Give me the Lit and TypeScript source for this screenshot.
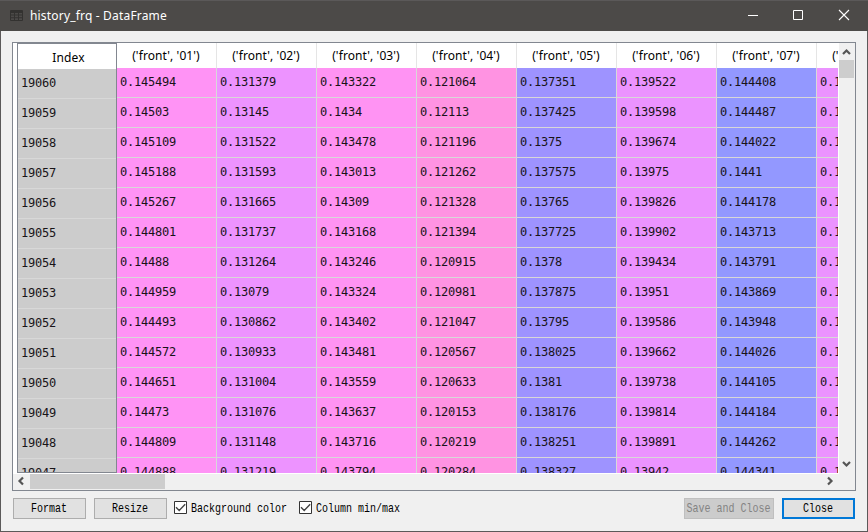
import { LitElement, html, css, svg } from "lit";
import { customElement } from "lit/decorators.js";
import { classMap } from "lit/directives/class-map.js";

const index = Array.from({ length: 14 }, (_, i) => String(19060 - i));

const columns = [
  { name: "('front', '01')", color: "#ff93f5", values: "0.145494 0.14503 0.145109 0.145188 0.145267 0.144801 0.14488 0.144959 0.144493 0.144572 0.144651 0.14473 0.144809 0.144888" },
  { name: "('front', '02')", color: "#ed93ff", values: "0.131379 0.13145 0.131522 0.131593 0.131665 0.131737 0.131264 0.13079 0.130862 0.130933 0.131004 0.131076 0.131148 0.131219" },
  { name: "('front', '03')", color: "#ff93f3", values: "0.143322 0.1434 0.143478 0.143013 0.14309 0.143168 0.143246 0.143324 0.143402 0.143481 0.143559 0.143637 0.143716 0.143794" },
  { name: "('front', '04')", color: "#ff93e2", values: "0.121064 0.12113 0.121196 0.121262 0.121328 0.121394 0.120915 0.120981 0.121047 0.120567 0.120633 0.120153 0.120219 0.120284" },
  { name: "('front', '05')", color: "#9e93ff", values: "0.137351 0.137425 0.1375 0.137575 0.13765 0.137725 0.1378 0.137875 0.13795 0.138025 0.1381 0.138176 0.138251 0.138327" },
  { name: "('front', '06')", color: "#eb93ff", values: "0.139522 0.139598 0.139674 0.13975 0.139826 0.139902 0.139434 0.13951 0.139586 0.139662 0.139738 0.139814 0.139891 0.13942" },
  { name: "('front', '07')", color: "#9398ff", values: "0.144408 0.144487 0.144022 0.1441 0.144178 0.143713 0.143791 0.143869 0.143948 0.144026 0.144105 0.144184 0.144262 0.144341" },
  { name: "('front', '08')", color: "#eb93ff", values: Array(14).fill("0.14").map((v, i) => v + (1020 + i * 7)).join(" ") },
];

const chevron = (d: string) => html`<svg class="chev" width="17" height="17" viewBox="0 0 17 17">
  ${svg`<path d=${d} fill="none" stroke="#555" stroke-width="2.2"></path>`}
</svg>`;

@customElement("title-bar")
export class TitleBar extends LitElement {
  static styles = css`
    :host { display: flex; height: 31px; flex: none; background: #4c4a48; color: #fff; align-items: center;
      box-sizing: border-box; border-top: 1px solid #5b5959; font: 12px "Noto Sans", sans-serif; }
    .icon { margin: 0 7px 2px 10px; }
    .title { flex: 1; white-space: pre; padding-bottom: 1px; letter-spacing: .18px; }
    .controls { display: flex; padding-right: 1px; }
    .ctl { width: 46px; height: 30px; display: block; }
  `;
  render() {
    return html`
      <svg class="icon" width="13" height="11" viewBox="0 0 13 11">
        <rect width="13" height="11" rx="1" fill="#333230"></rect>
        <path d="M1 3h3v1.5h-3zM5 3h3v1.5h-3zM9 3h3v1.5h-3zM1 5.6h3v1.6h-3zM5 5.6h3v1.6h-3zM9 5.6h3v1.6h-3zM1 8.3h3v1.6h-3zM5 8.3h3v1.6h-3zM9 8.3h3v1.6h-3z" fill="#4c4a48"></path>
      </svg>
      <span class="title">history_frq - DataFrame</span>
      <div class="controls">
        <svg class="ctl" viewBox="0 0 46 30"><path d="M19 14.5h10" stroke="#fff"></path></svg>
        <svg class="ctl" viewBox="0 0 46 30"><path d="M18.5 9.5h9v9h-9z" fill="none" stroke="#fff"></path></svg>
        <svg class="ctl" viewBox="0 0 46 30"><path d="M18 9l10 10M28 9l-10 10" stroke="#fff" stroke-width="1.1"></path></svg>
      </div>`;
  }
}

@customElement("data-grid")
export class DataGrid extends LitElement {
  static styles = css`
    :host { display: grid; box-sizing: border-box; width: 844px; height: 449px; border: 1px solid #828790;
      grid-template: 430px 17px / 826px 16px; background: #fff; }
    .view { display: flex; overflow: hidden; padding-left: 4px; border-right: 1px solid #fff; }
    .index { width: 100px; height: 430px; flex: none; box-sizing: border-box; overflow: hidden; background: #ccc;
      border: 1px solid #828790; }
    .head { background: #fff; height: 25px; display: flex; align-items: center; justify-content: center;
      font: 12px "Noto Sans", sans-serif; color: #000; white-space: pre; box-sizing: border-box; }
    .col .head { border-right: 1px solid #e5e5e5; padding-right: 1px; letter-spacing: .1px; }
    .index .head { padding: 1px 0 0 3px; letter-spacing: .2px; }
    .cell { height: 30px; line-height: 28px; box-sizing: border-box; padding-left: 3px;
      border-right: 1px solid #d8d8d8; border-bottom: 1px solid #d8d8d8;
      font-family: "DejaVu Sans Mono", monospace; font-size: 12px; letter-spacing: -.224px; color: #181418; }
    .index .cell { border-right: 0; line-height: 28px; }
    .col { width: 100px; flex: none; }
    .vbar, .hbar { background: #f0f0f0; display: flex; }
    .vbar { flex-direction: column; }
    .vthumb { width: 15px; height: 18px; background: #cdcdcd; }
    .hthumb { width: 135px; height: 15px; background: #cdcdcd; }
    .gap { flex: 1; }
    .hbar { border-top: 1px solid #fff; overflow: hidden; }
    .hbar .chev { margin-top: -1px; }
    .corner { background: #f0f0f0; }
    .chev { display: block; flex: none; }
  `;
  render() {
    return html`
      <div class="view">
        <div class="index">
          <div class="head">Index</div>
          ${index.map((v) => html`<div class="cell">${v}</div>`)}
        </div>
        ${columns.map((c) => html`<div class="col">
          <div class="head">${c.name}</div>
          ${c.values.split(" ").map((v) => html`<div class="cell" style="background:${c.color}">${v}</div>`)}
        </div>`)}
      </div>
      <div class="vbar">${chevron("M4 11l3.5-3.5l3.5 3.5")}<div class="vthumb"></div><div class="gap"></div>${chevron("M4 6l3.5 3.5l3.5-3.5")}</div>
      <div class="hbar">${chevron("M10 4.5l-3.5 3.5l3.5 3.5")}<div class="hthumb"></div><div class="gap"></div>${chevron("M6 4.5l3.5 3.5l-3.5 3.5")}</div>
      <div class="corner"></div>`;
  }
}

@customElement("app-root")
export class AppRoot extends LitElement {
  static styles = css`
    :host { display: flex; flex-direction: column; width: 868px; height: 532px; box-sizing: border-box;
      background: #f0f0f0; overflow: hidden; }
    .body { flex: 1; box-sizing: border-box; border: 1px solid #5b5959; border-top: 0; padding: 11px 0 0 11px; }
    .footer { display: flex; align-items: center; margin: 7px 12px 0 1px; height: 21px; }
    .btn { box-sizing: border-box; height: 21px; border: 1px solid #adadad; background: #e1e1e1; display: flex;
      align-items: center; justify-content: center; margin-right: 8px; width: 73px; flex: none; }
    .txt { font: 10px/12px "Liberation Mono", monospace; color: #000; white-space: pre; transform: scaleY(1.22);
      display: inline-block; padding-top: 1px; }
    .btn .txt { padding-right: 1px; }
    .disabled { width: 90px; background: #ccc; border-color: #bfbfbf; }
    .disabled .txt { color: #838383; }
    .primary { border: 2px solid #0078d7; margin-right: 0; }
    .check { display: flex; align-items: center; margin: 0 13px 0 -1px; }
    .box { margin-right: 4px; margin-bottom: 2px; }
    .gap { flex: 1; }
  `;
  private button(label: string, kind = "") {
    return html`<div class=${classMap({ btn: true, disabled: kind === "disabled", primary: kind === "primary" })}>
      <span class="txt">${label}</span></div>`;
  }
  private check(label: string) {
    return html`<div class="check">
      <svg class="box" width="13" height="13" viewBox="0 0 13 13">
        <path d="M.5 .5h12v12h-12z" fill="#fff" stroke="#333"></path>
        <path d="M2 6.2l3.2 3.3l6-6.3" fill="none" stroke="#444" stroke-width="1.4"></path>
      </svg><span class="txt">${label}</span></div>`;
  }
  render() {
    return html`
      <title-bar></title-bar>
      <div class="body">
        <data-grid></data-grid>
        <div class="footer">
          ${this.button("Format")}${this.button("Resize")}
          ${this.check("Background color")}${this.check("Column min/max")}
          <div class="gap"></div>
          ${this.button("Save and Close", "disabled")}${this.button("Close", "primary")}
        </div>
      </div>`;
  }
}
